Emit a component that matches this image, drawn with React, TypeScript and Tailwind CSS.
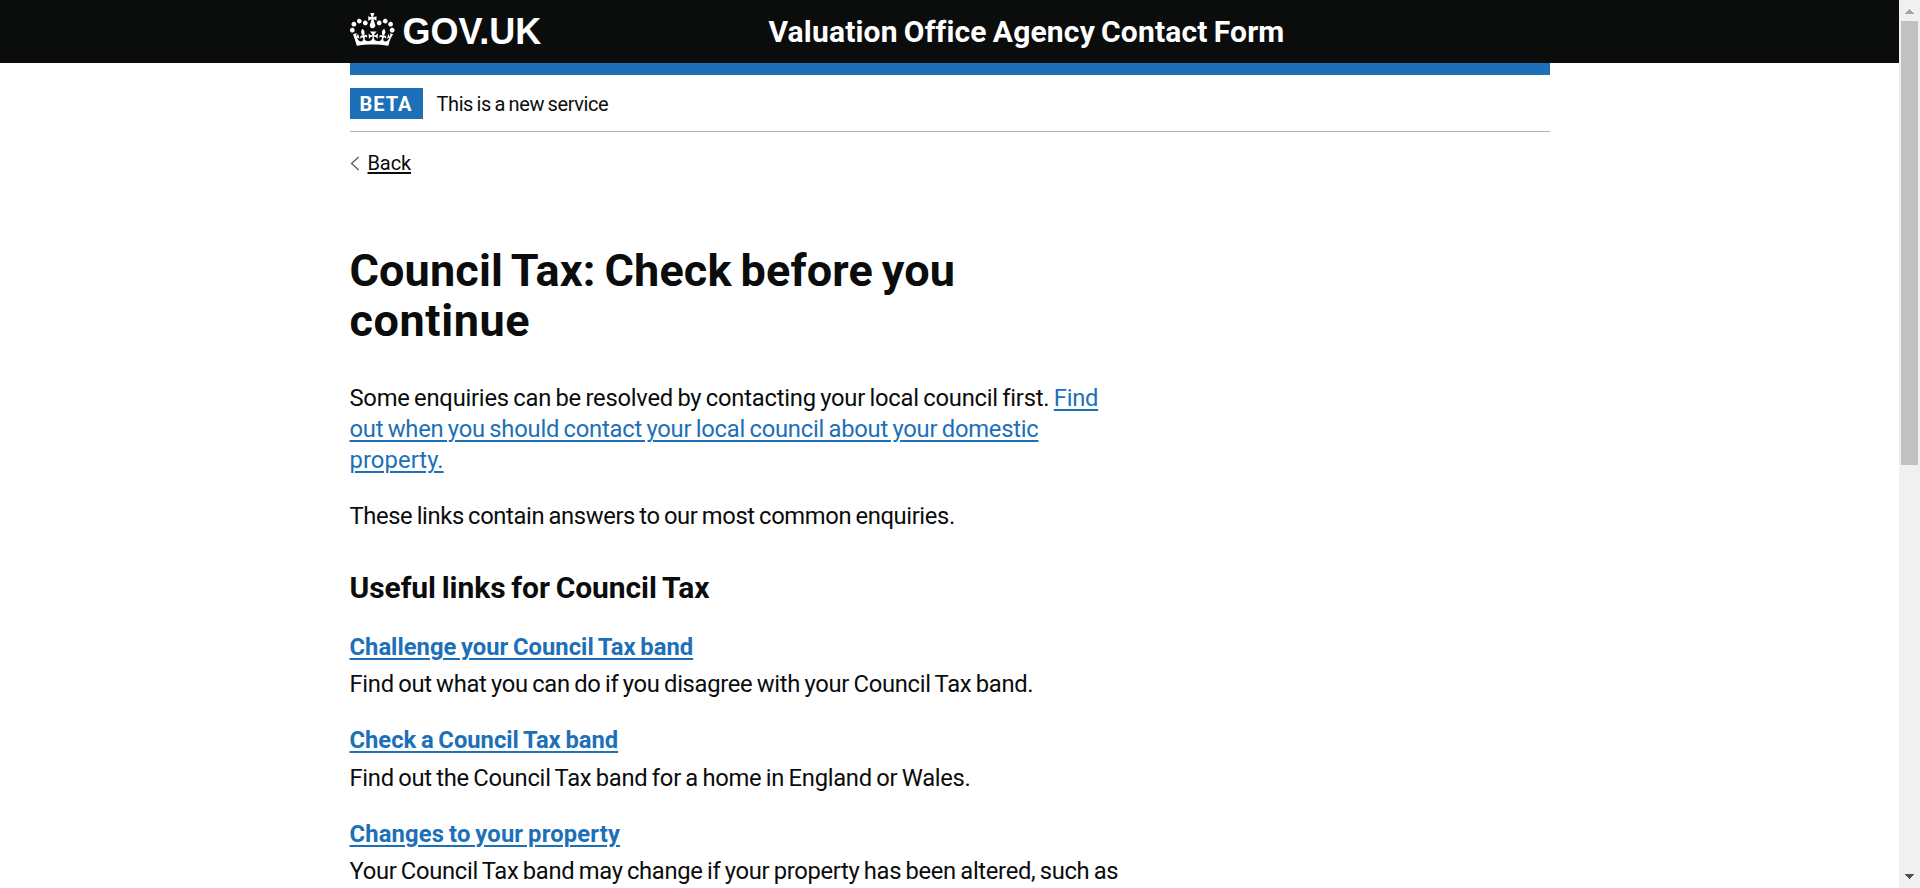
import { ReactNode } from "react";

const linkClass = "text-[#1d70b8] underline decoration-2 underline-offset-[3px]";

function Crown() {
  return (
    <svg className="mt-[8px] h-[40px] w-[45px] shrink-0" viewBox="0 0 36 32" aria-hidden="true">
      <path
        fill="currentColor"
        fillRule="evenodd"
        d="M6.7 12.2c1 .4 2.1-.1 2.5-1s-.1-2.1-1-2.5c-1-.4-2.1.1-2.5 1-.4 1 0 2.1 1 2.5m-4.3 2.5c1 .4 2.1-.1 2.5-1s-.1-2.1-1-2.5c-1-.4-2.1.1-2.5 1-.5 1 0 2.1 1 2.5m-1.3 4.8c1 .4 2.1-.1 2.5-1 .4-1-.1-2.1-1-2.5-1-.4-2.1.1-2.5 1-.4 1 0 2.1 1 2.5m10.4-5.8c1 .4 2.1-.1 2.5-1s-.1-2.1-1-2.5c-1-.4-2.1.1-2.5 1s0 2.1 1 2.5m17.4-1.5c-1 .4-2.1-.1-2.5-1s.1-2.1 1-2.5c1-.4 2.1.1 2.5 1 .5 1 0 2.1-1 2.5m4.3 2.5c-1 .4-2.1-.1-2.5-1s.1-2.1 1-2.5c1-.4 2.1.1 2.5 1 .5 1 0 2.1-1 2.5m1.3 4.8c-1 .4-2.1-.1-2.5-1-.4-1 .1-2.1 1-2.5 1-.4 2.1.1 2.5 1s0 2.1-1 2.5m-10.4-5.8c-1 .4-2.1-.1-2.5-1s.1-2.1 1-2.5c1-.4 2.1.1 2.5 1s0 2.1-1 2.5m-5.3-4.9 2.4 1.3V6.5l-2.4.8c-.1-.1-.1-.2-.2-.3s1-3 1-3h-3.4s1 2.9 1 3c-.1.1-.2.2-.2.3l-2.4-.7v3.6L17 8.9c.1.1.2.2.3.2l-1.4 4.2c-.1.2-.1.4-.1.6 0 1.1.8 2 1.9 2.2h.7c1-.2 1.9-1.1 1.9-2.1 0-.2 0-.4-.1-.6l-1.4-4.2c-.2-.1 0-.2.1-.3m-1 20.3c4.6 0 8.9.3 12.8.9 1.1-4.6 2.4-7.2 3.8-9.1l-2.6-.9c.3 1.3.3 1.9 0 2.8-.4-.4-.8-1.2-1.1-2.4l-1.2 4.2c.8-.5 1.4-.9 2-.9-1.1 2.5-2.6 3.1-3.5 3-1.1-.2-1.7-1.2-1.5-2.1.3-1.2 1.5-1.5 2.1-.1 1.1-2.3-.8-3-2-2.3 1.9-1.9 2.1-3.5.6-5.6-2.1 1.6-2.1 3.2-1.2 5.5-1.2-1.4-3.2-.6-2.5 1.6.9-1.4 2.1-.5 1.9.8-.2 1.1-1.7 2.1-3.5 1.9-2.7-.2-2.9-2.1-2.9-3.6.7-.1 1.9.5 2.9 1.9l.4-4.3c-1.1 1.1-2.1 1.4-3.2 1.4.4-1.2 2.1-3 2.1-3h-5.4s1.7 1.9 2.1 3c-1.1 0-2.1-.2-3.2-1.4l.4 4.3c1-1.4 2.2-2 2.9-1.9-.1 1.5-.2 3.4-2.9 3.6-1.9.2-3.4-.8-3.5-1.9-.2-1.3 1-2.2 1.9-.8.7-2.3-1.2-3-2.5-1.6.9-2.2.9-3.9-1.2-5.5-1.5 2-1.3 3.7.6 5.6-1.2-.7-3.1 0-2 2.3.6-1.4 1.8-1.1 2.1.1.2.9-.3 1.9-1.5 2.1-.9.2-2.4-.5-3.5-3 .6 0 1.2.3 2 .9l-1.2-4.2c-.3 1.1-.7 1.9-1.1 2.4-.3-.8-.2-1.4 0-2.8l-2.9.9C3 23 4.3 25.6 5.4 30.2c3.8-.6 8-1 12.6-1"
      />
    </svg>
  );
}

function UsefulLink({ title, children }: { title: ReactNode; children: ReactNode }) {
  return (
    <li className="flex flex-col items-start gap-[6px]">
      <a href="#" className={`font-bold ${linkClass}`}>
        {title}
      </a>
      <p>{children}</p>
    </li>
  );
}

function Scrollbar() {
  return (
    <div className="flex h-full w-[21px] shrink-0 flex-col items-center bg-[#f0f0f0]">
      <svg className="h-[21px] w-[21px] shrink-0" viewBox="0 0 21 21" shapeRendering="crispEdges">
        <path d="M6 14h9L10.5 9z" fill="#a3a3a3" />
      </svg>
      <div className="h-[444px] w-[17px] bg-[#c1c1c1]" />
      <svg className="mt-auto h-[21px] w-[21px] shrink-0" viewBox="0 0 21 21" shapeRendering="crispEdges">
        <path d="M6 7h9l-4.500 5z" fill="#505050" />
      </svg>
    </div>
  );
}

export default function App() {
  return (
    <div className="flex h-[888px] w-full overflow-hidden bg-white font-['Roboto',sans-serif] text-[#0b0c0c]">
      <div className="flex min-w-0 flex-1 flex-col">
        <header className="h-[63px] shrink-0 bg-[#0b0c0c] text-white">
          <div className="mx-auto flex w-[1200px]">
            <a href="#" className="flex w-[419px]">
              <Crown />
              <span className="ml-[8px] mt-[12px] font-['Liberation_Sans',sans-serif] text-[36px] font-bold leading-[40px]">
                GOV.UK
              </span>
            </a>
            <a
              href="#"
              className="mt-[13px] whitespace-nowrap text-[30px] font-bold leading-[37.5px] tracking-[0.17px] [word-spacing:-1.5px]"
            >
              Valuation Office Agency Contact Form
            </a>
          </div>
        </header>

        <div className="mx-auto flex w-[1200px] flex-col">
          <div className="h-[12px] bg-[#1d70b8]" />
          <div className="flex h-[57px] items-center border-b border-[#b1b4b6]">
            <strong className="flex h-[31px] items-center bg-[#1d70b8] px-[10px] pt-[2px] text-[20px] font-bold leading-[20px] tracking-[1px] text-white">
              BETA
            </strong>
            <span className="ml-[14px] pt-[2px] text-[20px] leading-[25px] tracking-[-0.4px] [word-spacing:-1px]">
              This is a new service
            </span>
          </div>

          <a href="#" className="mt-[19px] flex h-[25px] w-fit items-center text-[20px] leading-[25px]">
            <svg className="h-[15px] w-[10px]" viewBox="0 0 10 15" fill="none" stroke="#505a5f" strokeWidth="1.2">
              <path d="M8.700 1L1.500 7.500l7.200 6.500" />
            </svg>
            <span className="ml-[8px] tracking-[-0.1px] underline decoration-2 underline-offset-[2px]">Back</span>
          </a>

          <main className="mt-[70px] flex w-[800px] flex-col whitespace-nowrap text-[23.75px] leading-[31.25px] tracking-[-0.29px] [word-spacing:-1.2px]">
            <h1 className="text-[45px] font-bold leading-[50px] tracking-[0.14px] [word-spacing:-2.4px]">
              Council Tax: Check before you
              <br />
              <span className="tracking-[0.6px]">continue</span>
            </h1>

            <p className="mt-[37px] leading-[31px] tracking-[-0.23px]">
              Some enquiries can be resolved by contacting your local council first.{" "}
              <a href="#" className={linkClass}>
                Find
                <br />
                out when you should contact your local council about your domestic
                <br />
                <span className="tracking-[0.1px]">property.</span>
              </a>
            </p>

            <p className="mt-[25px] leading-[31px] tracking-[-0.37px]">These links contain answers to our most common enquiries.</p>

            <h2 className="mt-[37px] text-[30px] font-bold leading-[37px] tracking-[-0.08px] [word-spacing:-1.5px]">
              Useful links for Council Tax
            </h2>

            <ul className="mt-[26px] flex flex-col gap-[24.8px]">
              <UsefulLink title={<span className="tracking-[0.02px]">Challenge your Council Tax band</span>}>
                Find out what you can do if you disagree with your Council Tax band.
              </UsefulLink>
              <UsefulLink title={<span className="tracking-[0px]">Check a Council Tax band</span>}>
                <span className="tracking-[-0.27px]">Find out the Council Tax band for a home in England or Wales.</span>
              </UsefulLink>
              <UsefulLink title={<span className="tracking-[0.17px]">Changes to your property</span>}>
                <span className="tracking-[-0.31px]">
                  Your Council Tax band may change if your property has been altered, such as
                </span>
              </UsefulLink>
            </ul>
          </main>
        </div>
      </div>
      <Scrollbar />
    </div>
  );
}
